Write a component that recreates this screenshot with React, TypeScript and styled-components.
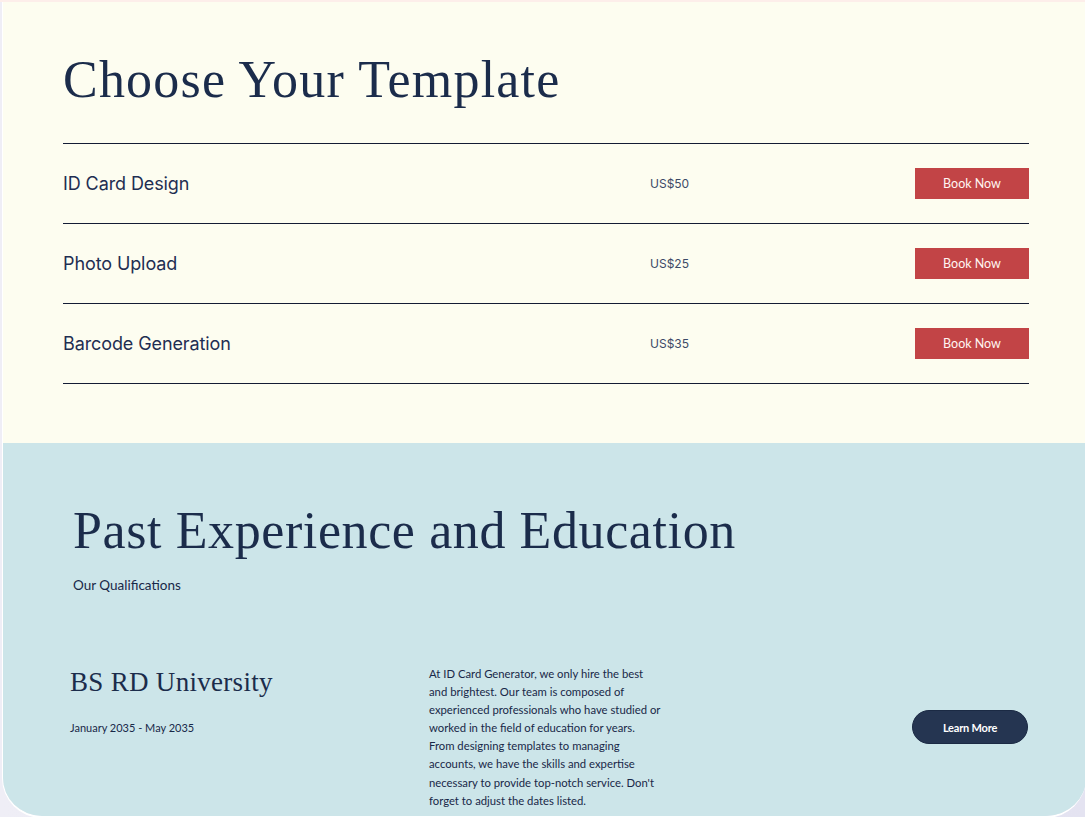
import React from "react";
import styled, { createGlobalStyle } from "styled-components";

const Global = createGlobalStyle`
  html, body { margin: 0; padding: 0; }
  body {
    background: linear-gradient(90deg, #efeef6, #e4e3f1);
    font-family: "Lato", "Liberation Sans", sans-serif;
    color: #1b2c4b;
  }
  #root { width: 1085px; }
`;

const TopStrip = styled.div`
  height: 2px;
  background: #fdeeea;
`;

const Card = styled.main`
  margin-left: 2px;
  width: 1083px;
  border-radius: 0 0 40px 40px;
  overflow: hidden;
  border-bottom: 2px solid #ffffff;
  border-left: 1px solid #ffffff;
`;

const Pricing = styled.section`
  background: #fdfdf0;
  padding: 46px 57px 59px 60px;
`;

const Heading = styled.h1<{ $indent?: number; $spacing?: number }>`
  margin: 0;
  font-family: "Liberation Serif", "DejaVu Serif", serif;
  font-weight: 400;
  font-size: 52px;
  line-height: 64px;
  color: #1b2c4b;
  letter-spacing: ${(p) => p.$spacing ?? 0.6}px;
  padding-left: ${(p) => p.$indent ?? 0}px;
`;

const List = styled.ul`
  list-style: none;
  margin: 31px 0 0;
  padding: 0;
  border-top: 1px solid #141c34;
`;

const Row = styled.li`
  display: grid;
  grid-template-columns: 587px 1fr auto;
  align-items: center;
  height: 79px;
  border-bottom: 1px solid #141c34;
`;

const Name = styled.span`
  font-family: "Inter", "Noto Sans", sans-serif;
  font-size: 18px;
  color: #1f2e52;
  letter-spacing: -0.1px;
`;

const Price = styled.span`
  font-family: "Inter", "Noto Sans", sans-serif;
  font-size: 12px;
  color: #3c4a66;
`;

const BookButton = styled.button`
  width: 114px;
  height: 31px;
  border: none;
  background: #c24446;
  color: #fff6f2;
  font-family: "Lato", sans-serif;
  font-size: 12.5px;
  cursor: pointer;
  padding: 0;
`;

const Experience = styled.section`
  background: #cce5e9;
  padding: 56px 58px 6px 67px;
  min-height: 309px;
`;

const Sub = styled.p`
  margin: 14px 0 0 3px;
  font-family: "Lato", sans-serif;
  font-size: 13.5px;
  color: #182848;
`;

const Item = styled.div`
  display: grid;
  grid-template-columns: 359px 1fr auto;
  align-items: start;
  margin-top: 62px;
`;

const School = styled.div`
  display: flex;
  flex-direction: column;
  padding-top: 10px;
`;

const SchoolName = styled.h2`
  margin: 0;
  font-family: "Liberation Serif", serif;
  font-weight: 400;
  font-size: 27px;
  line-height: 34px;
  color: #1b2c4b;
  letter-spacing: 0.3px;
`;

const Dates = styled.span`
  margin-top: 22px;
  font-family: "Lato", sans-serif;
  font-size: 11px;
  color: #182848;
`;

const Para = styled.p`
  margin: 10px 0 0;
  font-family: "Lato", sans-serif;
  font-size: 11.3px;
  line-height: 18.1px;
  color: #182848;
`;

const Line = styled.span`
  display: block;
  white-space: nowrap;
`;

const LearnButton = styled.button`
  margin-top: 55px;
  width: 116px;
  height: 34px;
  border-radius: 17px;
  border: 1px solid #1b2a44;
  background: #253551;
  color: #ffffff;
  font-family: "Lato", sans-serif;
  font-weight: 700;
  font-size: 11px;
  letter-spacing: -0.2px;
  cursor: pointer;
  padding: 0;
`;

const services = [
  { name: "ID Card Design", price: "US$50" },
  { name: "Photo Upload", price: "US$25" },
  { name: "Barcode Generation", price: "US$35" },
];

const paragraph = [
  "At ID Card Generator, we only hire the best",
  "and brightest. Our team is composed of",
  "experienced professionals who have studied or",
  "worked in the field of education for years.",
  "From designing templates to managing",
  "accounts, we have the skills and expertise",
  "necessary to provide top-notch service. Don't",
  "forget to adjust the dates listed.",
];

export default function App() {
  return (
    <>
      <Global />
      <TopStrip />
      <Card>
        <Pricing>
          <Heading $spacing={1.2}>Choose Your Template</Heading>
          <List>
            {services.map((s) => (
              <Row key={s.name}>
                <Name>{s.name}</Name>
                <Price>{s.price}</Price>
                <BookButton>Book Now</BookButton>
              </Row>
            ))}
          </List>
        </Pricing>
        <Experience>
          <Heading $indent={3}>Past Experience and Education</Heading>
          <Sub>Our Qualifications</Sub>
          <Item>
            <School>
              <SchoolName>BS RD University</SchoolName>
              <Dates>January 2035 - May 2035</Dates>
            </School>
            <Para>
              {paragraph.map((l) => (
                <Line key={l}>{l}</Line>
              ))}
            </Para>
            <LearnButton>Learn More</LearnButton>
          </Item>
        </Experience>
      </Card>
    </>
  );
}
